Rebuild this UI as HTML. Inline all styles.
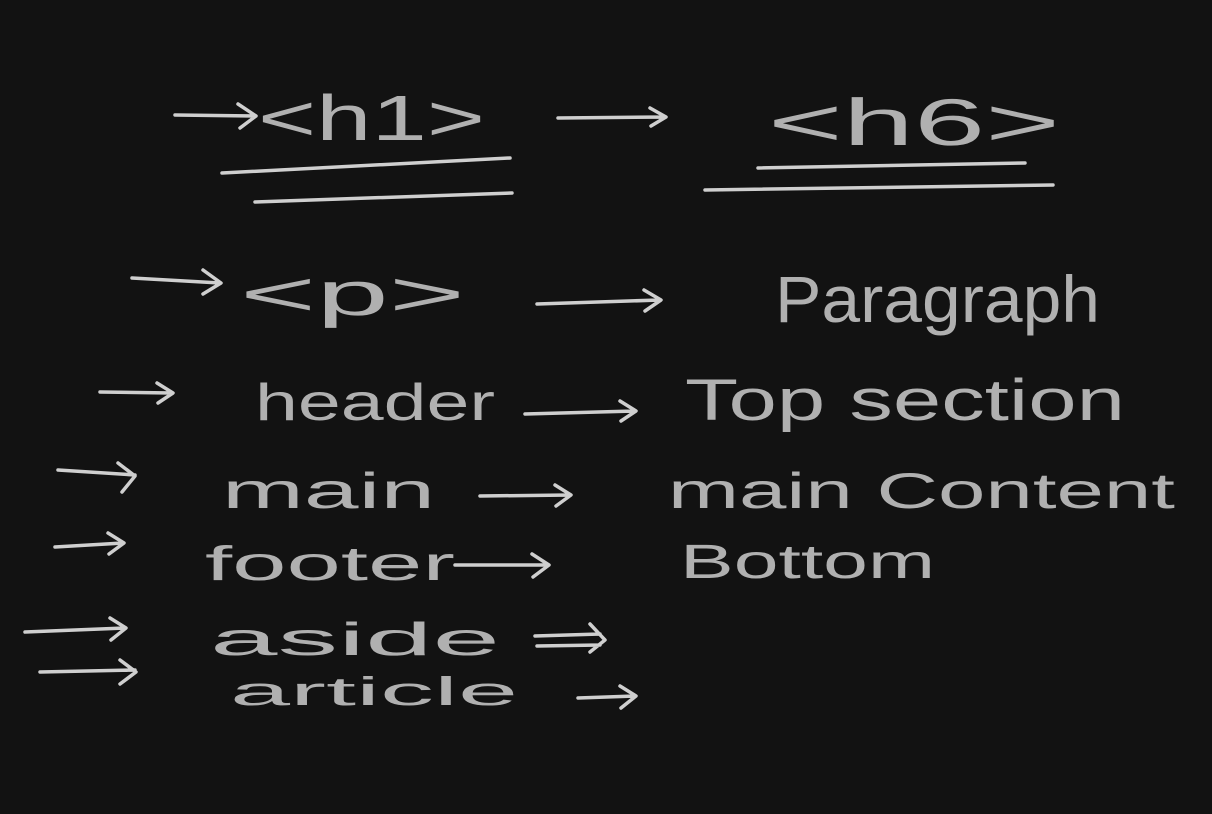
<!DOCTYPE html>
<html><head><meta charset="utf-8"><style>
html,body{margin:0;padding:0;background:#121212;width:1212px;height:814px;overflow:hidden}
svg{display:block}
text{font-family:"Liberation Sans",sans-serif;fill:#b0b0b0;font-weight:normal}
path{stroke:#cfcfcf;stroke-width:3.5;fill:none;stroke-linecap:round;stroke-linejoin:round}
</style></head><body>
<svg width="1212" height="814" viewBox="0 0 1212 814">
<path d="M175 115 L255 116 M238 104 L256 116 L240 128"/>
<text x="258" y="140" font-size="64" textLength="227" lengthAdjust="spacingAndGlyphs">&lt;h1&gt;</text>
<path d="M558 118 L665 117 M650 108 L666 117 L651 126"/>
<text x="768" y="145" font-size="66" textLength="292" lengthAdjust="spacingAndGlyphs">&lt;h6&gt;</text>
<path d="M222 173 L510 158 M255 202 L512 193 M758 168 L1025 163 M705 190 L1053 185"/>
<path d="M132 278 L220 283 M203 270 L221 283 L203 294"/>
<text x="240" y="315" font-size="62" textLength="225" lengthAdjust="spacingAndGlyphs">&lt;p&gt;</text>
<path d="M537 304 L660 300 M644 290 L661 300 L645 311"/>
<text x="775" y="322" font-size="66" textLength="325" lengthAdjust="spacingAndGlyphs">Paragraph</text>
<path d="M100 392 L172 393 M157 383 L173 393 L158 403"/>
<text x="255" y="420" font-size="52" textLength="240" lengthAdjust="spacingAndGlyphs">header</text>
<path d="M525 414 L635 411 M620 401 L636 411 L621 421"/>
<text x="685" y="420" font-size="58" textLength="440" lengthAdjust="spacingAndGlyphs">Top section</text>
<path d="M58 470 L135 475 M118 463 L135 476 L122 492"/>
<text x="222" y="508" font-size="50" textLength="213" lengthAdjust="spacingAndGlyphs">main</text>
<path d="M480 496 L570 495 M555 485 L571 495 L556 506"/>
<text x="668" y="508" font-size="50" textLength="507" lengthAdjust="spacingAndGlyphs">main   Content</text>
<path d="M55 547 L123 543 M108 533 L124 543 L109 554"/>
<text x="205" y="580" font-size="48" textLength="250" lengthAdjust="spacingAndGlyphs">footer</text>
<path d="M455 565 L548 565 M532 554 L549 565 L533 577"/>
<text x="680" y="578" font-size="48" textLength="255" lengthAdjust="spacingAndGlyphs">Bottom</text>
<path d="M25 632 L125 628 M110 618 L126 628 L111 640"/>
<text x="210" y="655" font-size="46" textLength="290" lengthAdjust="spacingAndGlyphs">aside</text>
<path d="M535 636 L600 634 M537 646 L600 645 M590 624 L605 640 L590 652"/>
<path d="M40 672 L135 670 M120 660 L136 672 L120 684"/>
<text x="230" y="705" font-size="40" textLength="288" lengthAdjust="spacingAndGlyphs">article</text>
<path d="M578 698 L635 696 M620 686 L636 696 L621 708"/>
</svg>
</body></html>
